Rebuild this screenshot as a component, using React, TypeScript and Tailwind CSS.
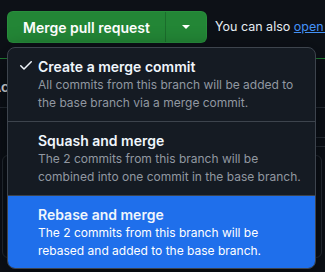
import React from 'react';

const options = [
  {
    title: 'Create a merge commit',
    desc: 'All commits from this branch will be added to the base branch via a merge commit.',
    checked: true,
  },
  {
    title: 'Squash and merge',
    desc: 'The 2 commits from this branch will be combined into one commit in the base branch.',
    checked: false,
  },
  {
    title: 'Rebase and merge',
    desc: 'The 2 commits from this branch will be rebased and added to the base branch.',
    checked: false,
    active: true,
  },
];

function CheckIcon() {
  return (
    <svg width="16" height="16" viewBox="0 0 16 16" fill="#f0f6fc" className="shrink-0 mt-[-1px]">
      <path d="M13.78 4.22a.75.75 0 0 1 0 1.06l-7.25 7.25a.75.75 0 0 1-1.06 0L2.22 9.28a.751.751 0 0 1 .018-1.042.751.751 0 0 1 1.042-.018L6 10.94l6.72-6.72a.75.75 0 0 1 1.06 0Z" />
    </svg>
  );
}

export default function App() {
  return (
    <div
      className="relative w-[325px] h-[272px] overflow-hidden bg-[#0d1117] text-[#f0f6fc]"
      style={{ fontFamily: 'Inter, "Noto Sans", sans-serif' }}
    >
      {/* top row: button + hint */}
      <div className="flex items-center pt-[11px] pl-[7px] whitespace-nowrap">
        <div className="flex shrink-0 h-[32px] rounded-md bg-[#238636] border border-[#2f9a45]/40 overflow-hidden">
          <div className="w-[157px] flex items-center justify-center text-[14px] font-semibold text-white">
            Merge pull request
          </div>
          <div className="w-[41px] flex items-center justify-center border-l border-[#1b6d2c]">
            <span className="w-0 h-0 border-l-[4px] border-r-[4px] border-t-[4px] border-l-transparent border-r-transparent border-t-white" />
          </div>
        </div>
        <span className="shrink-0 ml-[8px] text-[12.5px] text-[#e6edf3]">
          You can also <span className="text-[#4493f8] underline">open this in GitHub Desktop</span>
        </span>
      </div>

      {/* background content partially hidden by the menu */}
      <div className="mt-[15px] border-t border-[#238636]" />
      <div className="h-[49px] flex items-center border-b border-[#2a3038]">
        <span className="-ml-[9px] text-[14px] font-semibold text-white mt-[6px]">Ac</span>
      </div>
      <div className="flex h-[47px]">
        <div className="flex-1" />
        <div className="w-[10px] border-t border-b border-[#2a3038] mt-[29px] h-[10px]" />
      </div>
      <div className="ml-[2px] w-[320px] h-[103px] rounded-md border border-[#2a3038]" />

      {/* dropdown menu */}
      <div className="absolute top-[47px] left-[7px] w-[309px] rounded-lg border border-[#3d444d] bg-[#151b23] overflow-hidden shadow-[0_8px_24px_rgba(1,4,9,0.75)]">
        {options.map((o, i) => (
          <div
            key={o.title}
            className={`flex gap-[4px] pl-[10px] pr-[14px] pt-[9px] ${i === options.length - 1 ? 'pb-[8px]' : 'pb-[9px] border-b border-[#3d444d]'} ${o.active ? 'bg-[#1f6feb]' : ''}`}
          >
            <div className="w-[16px] shrink-0 pt-[1px]">{o.checked && <CheckIcon />}</div>
            <div className="flex flex-col">
              <div className="text-[14px] leading-[19px] font-semibold text-[#f0f6fc]">{o.title}</div>
              <div className={`text-[12px] leading-[18px] ${o.active ? 'text-white' : 'text-[#9198a1]'}`}>{o.desc}</div>
            </div>
          </div>
        ))}
      </div>
    </div>
  );
}
